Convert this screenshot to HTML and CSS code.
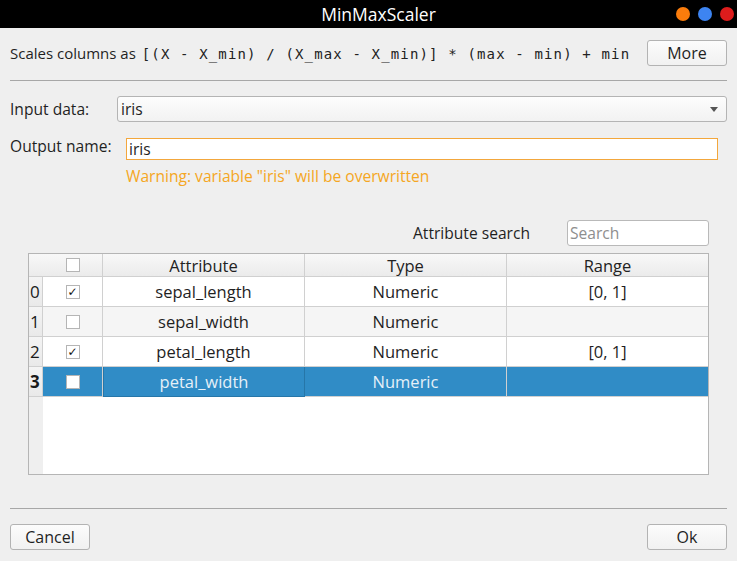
FILE: index.html
```html
<!DOCTYPE html>
<html>
<head>
<meta charset="utf-8">
<link rel="stylesheet" href="styles.css">
</head>
<body>
<div class="window">
  <div class="titlebar">
    <span class="title">MinMaxScaler</span>
    <div class="wbtns">
      <span class="dot orange"></span>
      <span class="dot blue"></span>
      <span class="dot red"></span>
    </div>
  </div>
  <div class="content">
    <div class="desc-row">
      <div class="desc">Scales columns as <span class="mono">[(X - X_min) / (X_max - X_min)] * (max - min) + min</span></div>
      <button class="btn more">More</button>
    </div>
    <div class="sep sep-top"></div>

    <div class="form-row input-row">
      <label class="lbl lbl-input">Input data:</label>
      <div class="combo">
        <span>iris</span>
        <span class="arrow"></span>
      </div>
    </div>

    <div class="form-row output-row">
      <label class="lbl lbl-output">Output name:</label>
      <div class="output-col">
        <div class="edit">iris</div>
        <div class="warning">Warning: variable "iris" will be overwritten</div>
      </div>
    </div>

    <div class="search-row">
      <span class="search-lbl">Attribute search</span>
      <div class="search">Search</div>
    </div>

    <div class="table">
      <div class="hcell corner"></div>
      <div class="hcell hcheck"><span class="cb"></span></div>
      <div class="hcell">Attribute</div>
      <div class="hcell">Type</div>
      <div class="hcell last">Range</div>

      <div class="vh">0</div>
      <div class="cell ccheck"><span class="cb checked">&#10003;</span></div>
      <div class="cell">sepal_length</div>
      <div class="cell">Numeric</div>
      <div class="cell last">[0, 1]</div>

      <div class="vh">1</div>
      <div class="cell ccheck alt"><span class="cb"></span></div>
      <div class="cell alt">sepal_width</div>
      <div class="cell alt">Numeric</div>
      <div class="cell alt last"></div>

      <div class="vh">2</div>
      <div class="cell ccheck"><span class="cb checked">&#10003;</span></div>
      <div class="cell">petal_length</div>
      <div class="cell">Numeric</div>
      <div class="cell last">[0, 1]</div>

      <div class="vh sel-vh">3</div>
      <div class="cell ccheck sel"><span class="cb"></span></div>
      <div class="cell sel focus">petal_width</div>
      <div class="cell sel">Numeric</div>
      <div class="cell sel last"></div>

      <div class="strip"></div>
      <div class="filler"></div>
    </div>

    <div class="sep sep-bottom"></div>
    <div class="bottom-row">
      <button class="btn cancel">Cancel</button>
      <button class="btn ok">Ok</button>
    </div>
  </div>
</div>
</body>
</html>
```

FILE: styles.css
```css
* { box-sizing: border-box; }
html, body {
  margin: 0;
  padding: 0;
  width: 737px;
  height: 561px;
  overflow: hidden;
  background: #efefef;
}
.window {
  font-family: "Open Sans", "Noto Sans", sans-serif;
  font-size: 15.6px;
  color: #1f1f1f;
}
.titlebar {
  position: relative;
  height: 28px;
  background: #000;
  display: flex;
  align-items: center;
  justify-content: center;
}
.title {
  color: #ffffff;
  font-size: 17.5px;
  margin-left: 20px;
}
.wbtns {
  position: absolute;
  right: 3px;
  top: 7px;
  display: flex;
  gap: 8px;
}
.dot {
  width: 14px;
  height: 14px;
  border-radius: 50%;
  display: block;
}
.orange { background: #fa7c0c; }
.blue { background: #3d84f1; }
.red { background: #dd1c1c; }

.content {
  padding: 0 10px;
}
.desc-row {
  margin-top: 12px;
  height: 26px;
  display: flex;
  align-items: center;
  justify-content: space-between;
}
.desc {
  white-space: nowrap;
  font-size: 15px;
}
.mono {
  font-family: "DejaVu Sans Mono", monospace;
  font-size: 14px;
  letter-spacing: 1.15px;
  margin-left: 2px;
  color: #222;
}
.btn {
  font-family: "Open Sans", "Noto Sans", sans-serif;
  font-size: 16px;
  color: #1f1f1f;
  height: 26px;
  width: 80px;
  padding: 0;
  border: 1px solid #b3b3b3;
  border-radius: 3px;
  background: linear-gradient(#fcfcfc, #f1f1f1);
}
.sep {
  height: 1px;
  background: #a7a7a7;
}
.sep-top { margin-top: 14px; }

.form-row {
  display: flex;
}
.input-row {
  margin-top: 15px;
  align-items: center;
}
.lbl { white-space: nowrap; }
.lbl-input { width: 107px; }
.combo {
  flex: 1;
  height: 26px;
  border: 1px solid #b4b4b4;
  border-radius: 3px;
  background: linear-gradient(#fdfdfd, #f2f2f2);
  display: flex;
  align-items: center;
  justify-content: space-between;
  padding: 0 8px 0 3px;
}
.arrow {
  width: 0;
  height: 0;
  border-left: 4px solid transparent;
  border-right: 4px solid transparent;
  border-top: 5px solid #555;
}
.output-row {
  margin-top: 16px;
}
.lbl-output {
  width: 116px;
  margin-top: -3px;
}
.output-col {
  flex: 1;
  margin-right: 9px;
}
.edit {
  height: 22px;
  border: 1px solid #f3a73c;
  background: #fff;
  padding: 0 2px;
  line-height: 20px;
}
.warning {
  color: #f5a623;
  margin-top: 5px;
}
.search-row {
  margin-top: 33px;
  display: flex;
  align-items: center;
  justify-content: flex-end;
  margin-right: 18px;
  height: 26px;
}
.search-lbl {
  margin-right: 37px;
}
.search {
  width: 142px;
  height: 26px;
  border: 1px solid #b9b9b9;
  border-radius: 3px;
  background: #fff;
  color: #8e8e8e;
  padding: 0 2px;
  line-height: 24px;
}
.table {
  margin: 7px 18px 0 18px;
  height: 222px;
  border: 1px solid #b5b5b5;
  display: grid;
  grid-template-columns: 14px 60px 202px 202px 1fr;
  grid-template-rows: 23px 30px 30px 30px 30px 1fr;
  background: #fff;
  font-size: 16.5px;
}
.hcell {
  background: linear-gradient(#f8f8f8, #ebebeb);
  border-right: 1px solid #d0d0d0;
  border-bottom: 1px solid #d0d0d0;
  display: flex;
  align-items: center;
  justify-content: center;
  color: #222;
}
.hcell.corner { border-right: none; }
.hcell.last, .cell.last { border-right: none; }
.vh {
  background: linear-gradient(#f4f4f4, #e9e9e9);
  border-right: 1px solid #d0d0d0;
  border-bottom: 1px solid #d0d0d0;
  display: flex;
  align-items: center;
  padding-left: 1px;
  font-size: 17px;
  color: #1a1a1a;
}
.vh.sel-vh { font-weight: bold; }
.cell {
  border-right: 1px solid #d0d0d0;
  border-bottom: 1px solid #d0d0d0;
  display: flex;
  align-items: center;
  justify-content: center;
  background: #fff;
}
.cell.alt { background: #f5f5f5; }
.cell.sel {
  background: #308cc6;
  color: #e6f0f8;
}
.cell.focus {
  border: 1px solid #2676a8;
  border-top: none;
}
.cb {
  width: 14px;
  height: 14px;
  border: 1px solid #b5b5b5;
  background: #fff;
  display: flex;
  align-items: center;
  justify-content: center;
  font-size: 12px;
  font-weight: bold;
  line-height: 1;
  color: #111;
  font-family: "DejaVu Sans", sans-serif;
}
.strip {
  background: #efefef;
}
.filler { grid-column: 2 / 6; background: #fff; }

.sep-bottom { margin-top: 33px; }
.bottom-row {
  margin-top: 15px;
  display: flex;
  justify-content: space-between;
}
.cancel { width: 80px; }
.ok { width: 80px; }
```
